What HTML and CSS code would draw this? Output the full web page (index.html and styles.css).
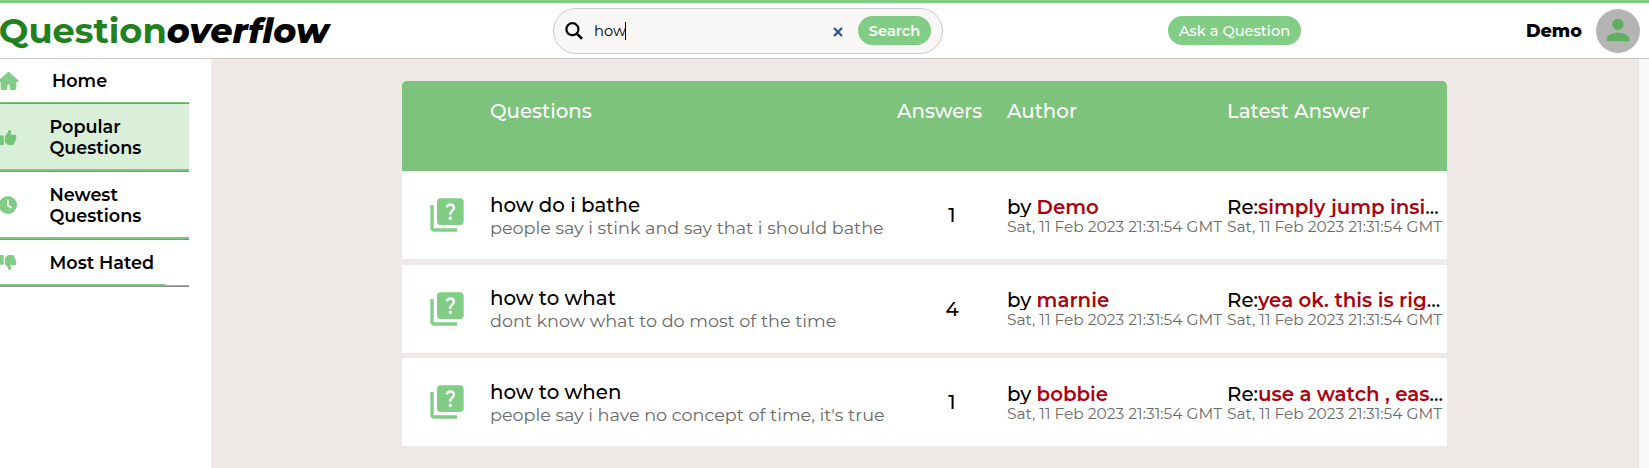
FILE: index.html
```html
<!DOCTYPE html>
<html lang="en">
<head>
<meta charset="utf-8">
<title>Questionoverflow</title>
<link rel="stylesheet" href="styles.css">
</head>
<body>
<svg class="defs" aria-hidden="true">
  <symbol id="quiz" viewBox="0 0 24 24"><path fill-rule="evenodd" d="M4 6H2v14c0 1.100.9 2 2 2h14v-2H4V6z"/><path fill-rule="evenodd" d="M20 2H8c-1.100 0-2 .9-2 2v12c0 1.100.9 2 2 2h12c1.100 0 2-.9 2-2V4c0-1.100-.9-2-2-2zm-5.990 13c-.590 0-1.050-.470-1.050-1.050 0-.590.470-1.040 1.050-1.040.590 0 1.040.450 1.040 1.040-.010.580-.450 1.050-1.040 1.050zm2.500-6.170c-.630.930-1.230 1.210-1.560 1.810-.130.240-.180.400-.180 1.180h-1.520c0-.410-.060-1.080.260-1.650.410-.730 1.180-1.160 1.630-1.800.480-.680.210-1.940-1.140-1.940-.880 0-1.320.670-1.500 1.230l-1.370-.570C11.510 5.960 12.520 5 13.990 5c1.230 0 2.080.560 2.510 1.260.370.600.580 1.730.010 2.570z"/></symbol>
  <symbol id="thumb" viewBox="0 0 512 512"><path d="M313.400 32.900c26 5.200 42.900 30.500 37.700 56.500l-2.300 11.400c-5.300 26.700-15.100 52.100-28.800 75.200h144c26.500 0 48 21.500 48 48 0 18.500-10.500 34.600-25.900 42.600C497 275.400 504 288.900 504 304c0 23.400-16.800 42.900-38.900 47.100 4.400 7.300 6.900 15.800 6.900 24.900 0 21.300-13.900 39.400-33.100 45.600.7 3.300 1.100 6.800 1.100 10.400 0 26.500-21.500 48-48 48h-97.500c-19 0-37.500-5.600-53.300-16.100l-38.500-25.700C176 420.400 160 390.400 160 358.300V247.100c0-29.200 13.300-56.700 36-75l7.400-5.900c26.500-21.200 44.600-51 51.200-84.200l2.300-11.400c5.200-26 30.500-42.900 56.500-37.700zM32 192h64c17.700 0 32 14.300 32 32v224c0 17.700-14.300 32-32 32H32c-17.700 0-32-14.300-32-32V224c0-17.700 14.300-32 32-32z"/></symbol>
</svg>

<header class="topbar">
  <div class="logo"><span class="logo-a">Question</span><span class="logo-b">overflow</span></div>
  <form class="search">
    <svg class="search-icon" viewBox="0 0 18 18"><circle cx="7.400" cy="7.200" r="6" fill="none" stroke="#000" stroke-width="2.200"/><path d="M11.800 11.600 17 16.700" stroke="#000" stroke-width="2.600"/></svg>
    <span class="query">how</span><span class="caret"></span>
    <svg class="clear" viewBox="0 0 10 10"><path d="M1 1 9 9M9 1 1 9" stroke="#2d568f" stroke-width="2.300"/></svg>
    <button type="button" class="pill search-btn">Search</button>
  </form>
  <button type="button" class="pill ask">Ask a Question</button>
  <div class="user">
    <span class="user-name">Demo</span>
    <span class="avatar"><svg viewBox="0 0 24 24"><path d="M12 12c2.210 0 4-1.790 4-4s-1.790-4-4-4-4 1.790-4 4 1.790 4 4 4zm0 2c-2.670 0-8 1.340-8 4v2h16v-2c0-2.660-5.330-4-8-4z"/></svg></span>
  </div>
</header>

<div class="page">
  <nav class="sidebar">
    <a class="item home"><svg class="i-home" viewBox="0 0 576 512"><path d="M575.800 255.500c0 18-15 32.100-32 32.100h-32l.7 160.200c0 2.700-.2 5.400-.5 8.100V472c0 22.100-17.900 40-40 40H360c-22 0-40-18-40-40v-88c0-17.700-14.300-32-32-32h-0c-18 0-32 14.300-32 32v88c0 22-18 40-40 40H104c-22 0-40-18-40-40V287.600H32c-18 0-32-14-32-32.100 0-9 3-17 10-24L266.400 8c7-7 15-8 22-8s15 2 21 7l255 224.500c8 7 12 15 11.400 24z"/></svg><span>Home</span></a>
    <a class="item two active"><svg class="i-thumb"><use href="#thumb"/></svg><span>Popular<br>Questions</span></a>
    <a class="item two"><svg class="i-clock" viewBox="0 0 18 18"><circle cx="9" cy="9" r="9"/><path d="M8.900 4.300V9.500L12 11.500" fill="none" stroke="#fff" stroke-width="1.500" stroke-linecap="round"/></svg><span>Newest<br>Questions</span></a>
    <a class="item last"><svg class="i-thumb flip"><use href="#thumb"/></svg><span>Most Hated</span></a>
  </nav>

  <main class="content">
    <div class="table">
      <div class="row head">
        <span></span><span>Questions</span><span>Answers</span><span>Author</span><span>Latest Answer</span>
      </div>
      <div class="row">
        <svg class="quiz"><use href="#quiz"/></svg>
        <div class="question"><div class="title">how do i bathe</div><div class="sub">people say i stink and say that i should bathe</div></div>
        <div class="count">1</div>
        <div class="meta"><div class="line">by <b>Demo</b></div><div class="date">Sat, 11 Feb 2023 21:31:54 GMT</div></div>
        <div class="meta"><div class="line">Re:<b>simply jump insi</b>...</div><div class="date">Sat, 11 Feb 2023 21:31:54 GMT</div></div>
      </div>
      <div class="row">
        <svg class="quiz"><use href="#quiz"/></svg>
        <div class="question"><div class="title">how to what</div><div class="sub">dont know what to do most of the time</div></div>
        <div class="count">4</div>
        <div class="meta"><div class="line">by <b>marnie</b></div><div class="date">Sat, 11 Feb 2023 21:31:54 GMT</div></div>
        <div class="meta"><div class="line">Re:<b>yea ok. this is rig</b>...</div><div class="date">Sat, 11 Feb 2023 21:31:54 GMT</div></div>
      </div>
      <div class="row">
        <svg class="quiz"><use href="#quiz"/></svg>
        <div class="question"><div class="title">how to when</div><div class="sub">people say i have no concept of time, it's true</div></div>
        <div class="count">1</div>
        <div class="meta"><div class="line">by <b>bobbie</b></div><div class="date">Sat, 11 Feb 2023 21:31:54 GMT</div></div>
        <div class="meta"><div class="line">Re:<b>use a watch , eas</b>...</div><div class="date">Sat, 11 Feb 2023 21:31:54 GMT</div></div>
      </div>
    </div>
  </main>
  <div class="gutter"></div>
</div>
</body>
</html>
```
FILE: styles.css
```css
* { box-sizing: border-box; }
body {
  margin: 0;
  height: 468px;
  overflow: hidden;
  display: flex;
  flex-direction: column;
  font-family: Montserrat, Inter, sans-serif;
  color: #000;
  background: #fff;
}
.defs { display: none; }

.topbar {
  height: 59px;
  flex: none;
  display: flex;
  align-items: center;
  border-top: 3px solid #82cd85;
  border-bottom: 1px solid #c8c8c8;
}
.logo {
  width: 553px;
  padding-bottom: 1px;
  font-size: 35.2px;
  line-height: 53px;
  white-space: nowrap;
}
.logo-a { color: #23801f; font-weight: 700; margin-left: -1.3px; }
.logo-b { font-size: 34.7px; font-weight: 800; font-style: italic; }

.search {
  width: 390px;
  height: 46px;
  display: flex;
  align-items: center;
  padding-left: 11px;
  border: 1px solid #c9c9c9;
  border-radius: 23px;
  background: #f8f7f5;
}
.search-icon { width: 18px; height: 18px; margin-right: 11px; }
.query { font-size: 14.7px; }
.caret { width: 1px; height: 18px; margin-left: -1px; background: #000; }
.clear { width: 10px; height: 10px; margin: 2px 15px 0 auto; }
.pill {
  height: 29px;
  padding: 0;
  border: 0;
  border-radius: 15px;
  background: #82cd85;
  color: #fff;
  font: 600 14.6px/30px Montserrat, Inter, sans-serif;
}
.search-btn { width: 73px; margin-right: 11px; }
.ask { width: 133px; margin-left: 225px; font-weight: 500; }
.user { margin-left: auto; margin-right: 9px; display: flex; align-items: center; }
.user-name { font-size: 17.6px; font-weight: 800; margin-right: 14px; }
.avatar {
  width: 44px;
  height: 44px;
  border-radius: 50%;
  background: #b4b4b4;
  display: grid;
  place-items: center;
}
.avatar svg { width: 34px; height: 34px; fill: #5fae62; margin-top: -2px; }

.page { flex: 1; display: flex; min-height: 0; }
.sidebar { width: 211px; padding-right: 22px; }
.item {
  display: flex;
  align-items: center;
  border-bottom: 1px solid #8c8c8c;
  box-shadow: inset 0 -2px #7cc57f;
  font-size: 17.6px;
  font-weight: 600;
  line-height: 21px;
}
.item > svg { flex: none; fill: #82cd85; }
.item > span { margin-left: auto; width: 139.5px; padding-bottom: 2px; }
.home { height: 45px; box-shadow: inset 0 -1px #7cc57f; }
.home > span { width: 137px; }
.two { height: 68px; }
.active { background: #d9efda; }
.last {
  height: 47px;
  background: linear-gradient(#7cc57f, #7cc57f) 0 100% / 165px 2px no-repeat;
  box-shadow: inset 0 -1px #7cc57f;
}
.i-home { width: 21px; height: 18px; margin: -1px 0 0 -2px; }
.item > .i-thumb { width: 18px; height: 17px; margin-left: -1px; fill: #72c675; }
.i-clock { width: 18px; height: 18px; margin-left: -1px; margin-top: -1px; }
.item > .flip { transform: scaleY(-1); fill: #82cd85; margin-top: -1px; }

.content { flex: 1; padding: 22px 191px 0; background: #eee9e6; }
.table { width: 1045px; display: flex; flex-direction: column; gap: 5.6px; }
.row {
  height: 88px;
  display: grid;
  grid-template-columns: 88px 407px 110px 220px 220px;
  align-items: center;
  background: #fff;
  font-size: 19.8px;
  font-weight: 500;
  white-space: nowrap;
}
.head {
  height: 90px;
  margin-bottom: -5.6px;
  padding-top: 18px;
  align-items: start;
  border-radius: 5px 5px 0 0;
  background: #7dc37b;
  color: #fff;
  line-height: 24px;
}
.quiz { width: 40px; height: 40px; margin-left: 24.5px; fill: #82cd85; }
.question { padding-top: 1.6px; }
.title { line-height: 24px; }
.sub { font-size: 17.6px; font-weight: 400; line-height: 22px; color: #6a6a6a; }
.count { text-align: center; }
.meta { padding-top: 2.6px; }
.line { height: 20px; line-height: 20px; overflow: hidden; }
.line b { font-weight: 600; color: #aa0410; }
.date { font-size: 15.45px; font-weight: 400; line-height: 19px; color: #6a6a6a; }

.gutter { width: 11px; background: #fafafa; border-left: 1px solid #e4e4e4; }
```
